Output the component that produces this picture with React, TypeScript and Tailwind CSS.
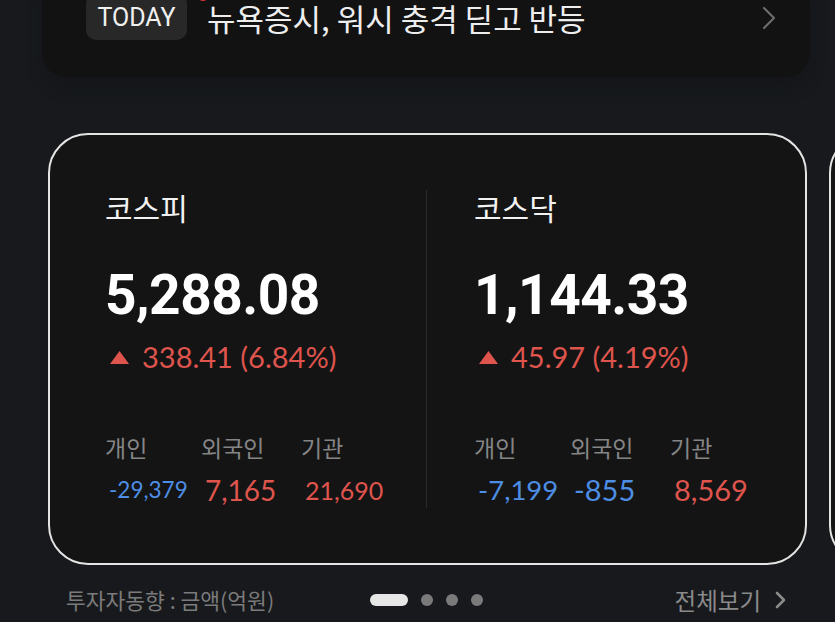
import React from "react";

const KR = "font-['Noto_Sans_CJK_KR','Noto_Sans',sans-serif]";
const NUM = "font-['Roboto','Noto_Sans_CJK_KR',sans-serif]";
const LATO = "font-['Lato','Noto_Sans_CJK_KR',sans-serif]";

type Flow = { value: string; up: boolean; size: string };

type Index = {
  name: string;
  price: string;
  change: string;
  flows: Flow[];
};

const indices: Index[] = [
  {
    name: "코스피",
    price: "5,288.08",
    change: "338.41 (6.84%)",
    flows: [
      { value: "-29,379", up: false, size: "text-[22.5px]" },
      { value: "7,165", up: true, size: "text-[28px]" },
      { value: "21,690", up: true, size: "text-[25px]" },
    ],
  },
  {
    name: "코스닥",
    price: "1,144.33",
    change: "45.97 (4.19%)",
    flows: [
      { value: "-7,199", up: false, size: "text-[27.5px]" },
      { value: "-855", up: false, size: "text-[29px]" },
      { value: "8,569", up: true, size: "text-[29px]" },
    ],
  },
];

const investors = ["개인", "외국인", "기관"];

function IndexColumn({ data, padLeft }: { data: Index; padLeft: string }) {
  return (
    <div className={`flex flex-col ${padLeft}`}>
      <div className={`${KR} text-[30px] leading-[36px] text-[#f2f2f2]`}>{data.name}</div>
      <div className={`${NUM} mt-[40px] text-[55px] font-bold leading-[60px] tracking-[-0.5px] text-white`}>
        {data.price}
      </div>
      <div className={`mt-[15px] flex items-center ${LATO} text-[29px] leading-[34px] text-[#df544c]`}>
        <svg width="19" height="13" viewBox="0 0 19 13" className="ml-[5px] mr-[13px]">
          <polygon points="9.5,0 19,13 0,13" fill="#df544c" />
        </svg>
        <span>{data.change}</span>
      </div>
      <div className="mt-[58px] grid grid-cols-[96px_100px_1fr]">
        {investors.map((label) => (
          <div key={label} className={`${KR} text-[23px] leading-[30px] text-[#858585]`}>
            {label}
          </div>
        ))}
        {data.flows.map((f, i) => (
          <div
            key={i}
            className={`${LATO} ${f.size} mt-[11px] h-[34px] pl-[4px] leading-[34px] ${
              f.up ? "text-[#df544c]" : "text-[#4d8ee4]"
            }`}
          >
            {f.value}
          </div>
        ))}
      </div>
    </div>
  );
}

export default function App() {
  return (
    <div className="h-[622px] w-[835px] overflow-hidden bg-[#17191d]">
      {/* headline card, scrolled partly out of view */}
      <div className="-mt-[30px] ml-[42px] flex h-[107px] w-[768px] items-start rounded-[24px] bg-[#121213] pl-[44px] pr-[33px] pt-[24px] shadow-[0_10px_14px_rgba(20,22,26,0.9)]">
        <div className="relative flex h-[46px] w-[101px] items-center justify-center rounded-[10px] bg-[#282828]">
          <span className={`${NUM} text-[25px] leading-none text-[#f0f0f0]`}>TODAY</span>
          <span className="absolute left-[113px] top-[-1px] h-[8px] w-[8px] rounded-full bg-[#e2343a]" />
        </div>
        <div className={`${KR} ml-[20px] mt-[8px] text-[31px] leading-[32px] text-[#eeeeee]`}>
          뉴욕증시, 워시 충격 딛고 반등
        </div>
        <svg width="16" height="24" viewBox="0 0 16 24" className="ml-auto mt-[12px]">
          <path d="M3 2 L13 12 L3 22" fill="none" stroke="#6c6c6c" strokeWidth="2.2" strokeLinecap="round" strokeLinejoin="round" />
        </svg>
      </div>

      {/* index cards carousel */}
      <div className="mt-[56px] flex gap-[22px] pl-[48px]">
        <div className="flex h-[432px] w-[759px] shrink-0 rounded-[40px] border-2 border-[#e4e4e4] bg-[#141415] pt-[54px]">
          <div className="w-[376px] shrink-0">
            <IndexColumn data={indices[0]} padLeft="pl-[55px]" />
          </div>
          <div className="mt-[1px] h-[318px] w-px bg-[#2a2a2b]" />
          <div className="flex-1">
            <IndexColumn data={indices[1]} padLeft="pl-[47px]" />
          </div>
        </div>
        <div className="h-[432px] w-[759px] shrink-0 rounded-[40px] border-2 border-[#e4e4e4] bg-[#141415]" />
      </div>

      {/* footer */}
      <div className="mt-[18px] flex h-[34px] items-center pl-[66px] pr-[47px]">
        <span className={`${KR} w-[304px] text-[21.5px] leading-[34px] text-[#7b7b7b]`}>투자자동향 : 금액(억원)</span>
        <div className="flex items-center gap-[13px]">
          <span className="h-[12px] w-[38px] rounded-full bg-[#e6e6e6]" />
          <span className="h-[12px] w-[12px] rounded-full bg-[#7a7a7a]" />
          <span className="h-[12px] w-[12px] rounded-full bg-[#7a7a7a]" />
          <span className="h-[12px] w-[12px] rounded-full bg-[#7a7a7a]" />
        </div>
        <div className="ml-auto flex items-center">
          <span className={`${KR} text-[23.5px] leading-[34px] text-[#8a8a8a]`}>전체보기</span>
          <svg width="14" height="20" viewBox="0 0 14 20" className="ml-[13px]">
            <path d="M3 3 L10 10 L3 17" fill="none" stroke="#8a8a8a" strokeWidth="2.6" strokeLinecap="round" strokeLinejoin="round" />
          </svg>
        </div>
      </div>
    </div>
  );
}
